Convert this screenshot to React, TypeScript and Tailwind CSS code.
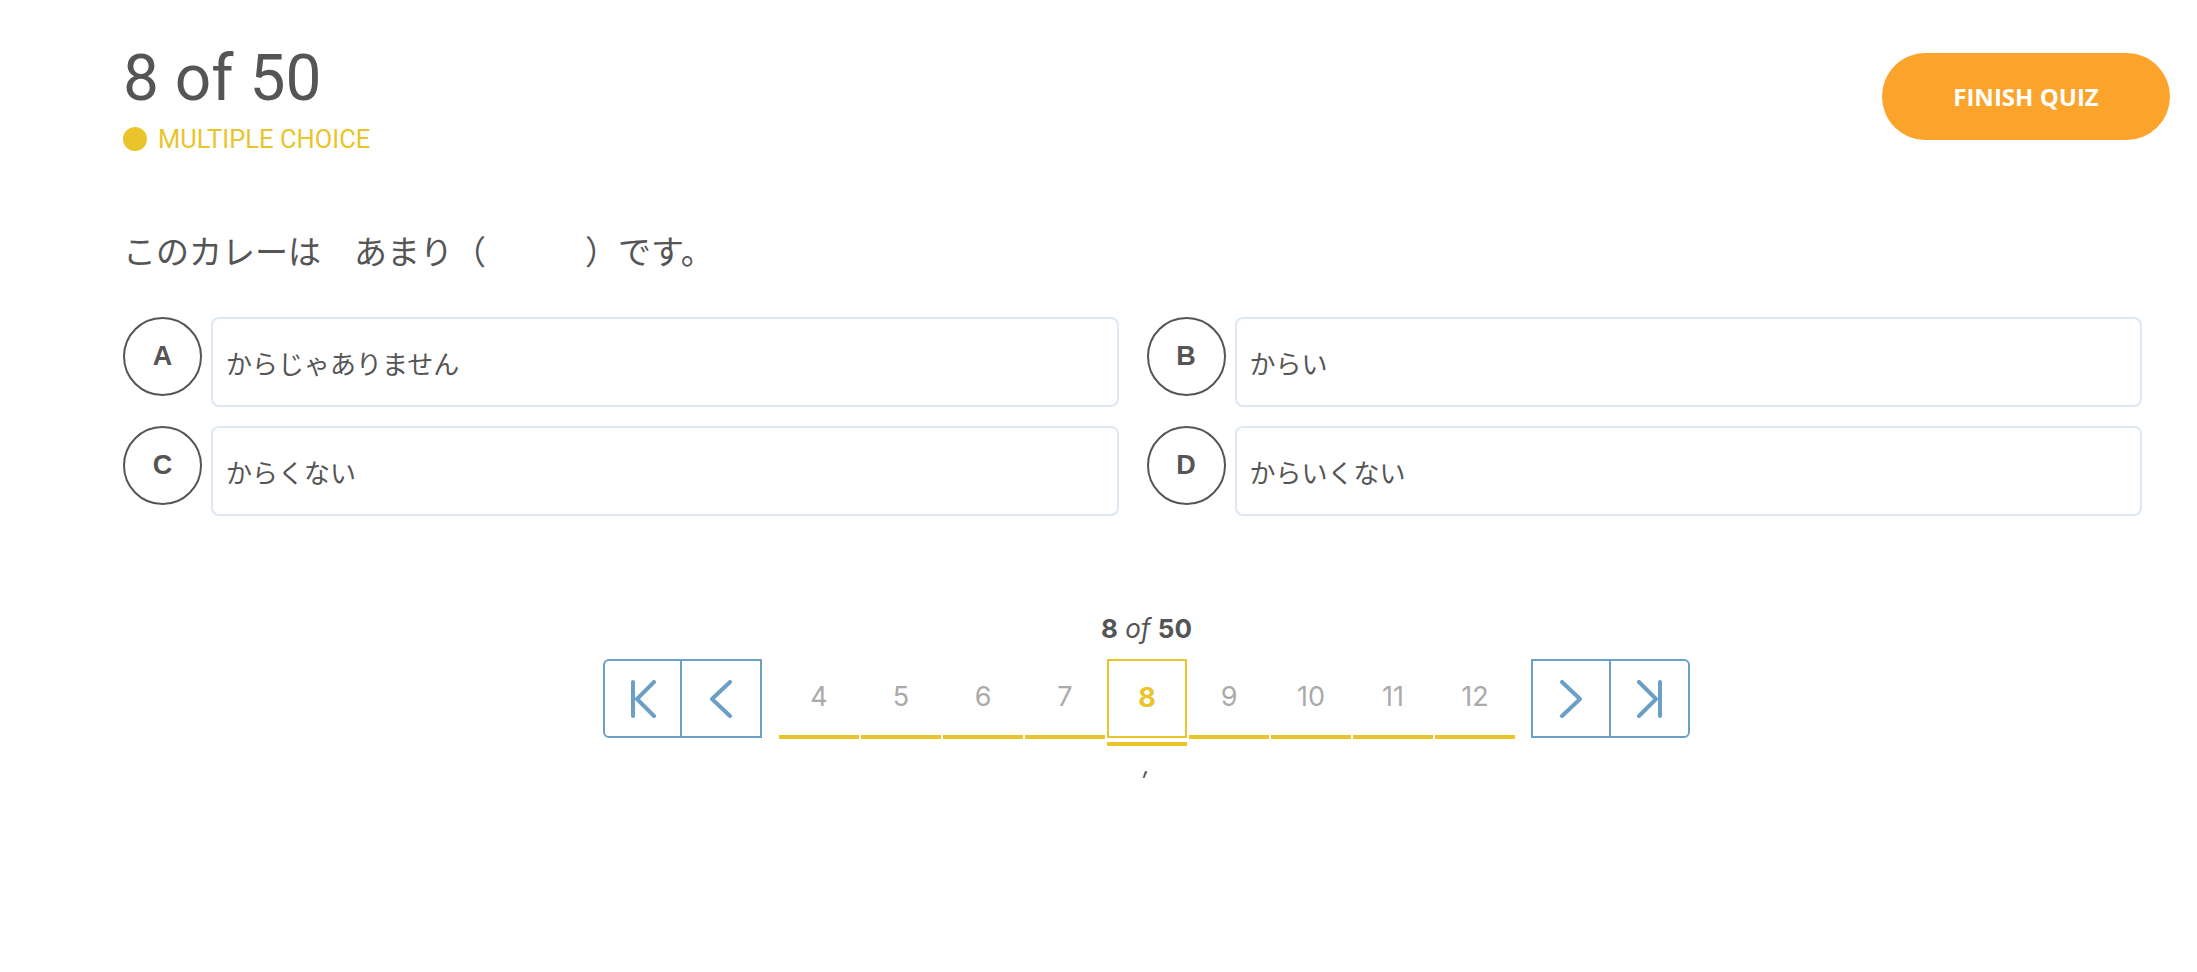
import React from "react"

const options = [
  { key: "A", text: "からじゃありません" },
  { key: "B", text: "からい" },
  { key: "C", text: "からくない" },
  { key: "D", text: "からいくない" },
]

const pages = [4, 5, 6, 7, 8, 9, 10, 11, 12]
const current = 8

const FirstIcon = () => (
  <svg width="28" height="38" viewBox="0 0 28 38" fill="none" stroke="#6b9fc6" strokeWidth="4" strokeLinecap="round" strokeLinejoin="round">
    <line x1="4" y1="2" x2="4" y2="36" />
    <polyline points="25,2 8,19 25,36" />
  </svg>
)

const PrevIcon = () => (
  <svg width="26" height="38" viewBox="0 0 26 38" fill="none" stroke="#6b9fc6" strokeWidth="4" strokeLinecap="round" strokeLinejoin="round">
    <polyline points="22,2 4,19 22,36" />
  </svg>
)

const NextIcon = () => (
  <svg width="26" height="38" viewBox="0 0 26 38" fill="none" stroke="#6b9fc6" strokeWidth="4" strokeLinecap="round" strokeLinejoin="round">
    <polyline points="4,2 22,19 4,36" />
  </svg>
)

const LastIcon = () => (
  <svg width="28" height="38" viewBox="0 0 28 38" fill="none" stroke="#6b9fc6" strokeWidth="4" strokeLinecap="round" strokeLinejoin="round">
    <polyline points="3,2 20,19 3,36" />
    <line x1="24" y1="2" x2="24" y2="36" />
  </svg>
)

const App = () => {
  return (
    <div className="min-h-screen bg-white font-['Inter',sans-serif]">
      <div className="pl-[123px] pr-[27px]">
        {/* Header */}
        <div className="flex justify-between items-start pt-[47px]">
          <div>
            <h1 className="text-[64px] leading-none text-[#555] font-['Roboto',sans-serif] font-normal">8 of 50</h1>
            <div className="mt-[13px] flex items-center gap-[11px]">
              <span className="w-6 h-6 rounded-full bg-[#e9c42b]" />
              <span className="text-[25.5px] leading-[30px] text-[#e9c42b] font-['Roboto',sans-serif]">MULTIPLE CHOICE</span>
            </div>
          </div>
          <button className="mt-[6px] w-[288px] h-[87px] rounded-full bg-[#fca32b] text-white text-[24px] font-bold font-['Open_Sans',sans-serif]">
            FINISH QUIZ
          </button>
        </div>

        {/* Question */}
        <p className="mt-[76px] text-[33px] leading-[40px] text-[#555] font-['Noto_Sans_CJK_JP',sans-serif]">
          このカレーは　あまり（　　　）です。
        </p>

        {/* Options */}
        <div className="mt-[47px] grid grid-cols-2 gap-y-[19px]">
          {options.map((o) => (
            <div key={o.key} className="flex items-start gap-[9px] pr-[28px]">
              <div className="w-[79px] h-[79px] shrink-0 rounded-full border-2 border-[#555] flex items-center justify-center text-[27px] font-bold text-[#555] font-['Liberation_Sans',sans-serif]">
                {o.key}
              </div>
              <div className="flex-1 h-[90px] rounded-[8px] border-2 border-[#dde8f2] flex items-center pl-[13px] text-[26px] text-[#555] font-['Noto_Sans_CJK_JP',sans-serif]">
                {o.text}
              </div>
            </div>
          ))}
        </div>

        {/* Pagination */}
        <div className="mt-[98px] flex flex-col items-center">
          <div className="text-[26px] leading-[30px] text-[#555]">
            <span className="font-bold">8</span> <span className="italic">of</span> <span className="font-bold">50</span>
          </div>
          <div className="mt-[15px] flex items-start">
            <div className="flex border-2 border-[#6b9fc6] rounded-l-[6px]">
              <button className="w-[77px] h-[75px] border-r-2 border-[#6b9fc6] flex items-center justify-center">
                <FirstIcon />
              </button>
              <button className="w-[78px] h-[75px] flex items-center justify-center">
                <PrevIcon />
              </button>
            </div>

            <div className="ml-[17px] flex items-start gap-[2px]">
              {pages.map((p) =>
                p === current ? (
                  <div key={p} className="w-[80px] flex flex-col">
                    <div className="h-[79px] border-2 border-[#e9c42b] flex items-center justify-center text-[27px] font-bold text-[#e9c42b]">
                      {p}
                    </div>
                    <div className="mt-[4px] h-[4px] bg-[#e9c42b]" />
                  </div>
                ) : (
                  <div key={p} className="w-[80px] h-[80px] border-b-4 border-[#e9c42b] flex items-center justify-center text-[27px] text-[#aaa]">
                    {p}
                  </div>
                )
              )}
            </div>

            <div className="ml-[16px] flex border-2 border-[#6b9fc6] rounded-r-[6px]">
              <button className="w-[78px] h-[75px] border-r-2 border-[#6b9fc6] flex items-center justify-center">
                <NextIcon />
              </button>
              <button className="w-[77px] h-[75px] flex items-center justify-center">
                <LastIcon />
              </button>
            </div>
          </div>
          <div className="mt-[5px] text-[24px] leading-[30px] italic text-[#555]">,</div>
        </div>
      </div>
    </div>
  )
}

export default App
